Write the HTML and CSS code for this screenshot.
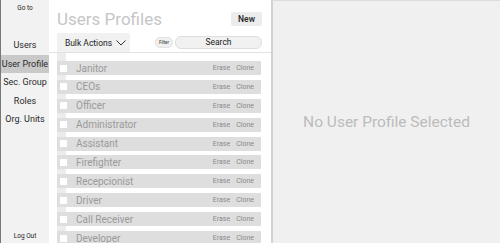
FILE: index.html
```html
<!DOCTYPE html>
<html lang="en">
<head>
    <meta charset="UTF-8">
    <title>Users Profiles</title>
    <link rel="stylesheet" href="styles.css">
</head>
<body>
    <nav class="sidebar">
        <div class="goto">Go to</div>
        <ul class="menu">
            <li>Users</li>
            <li class="active">User Profile</li>
            <li>Sec. Group</li>
            <li>Roles</li>
            <li>Org. Units</li>
        </ul>
        <div class="logout">Log Out</div>
    </nav>

    <section class="profiles">
        <div class="header">
            <h1>Users Profiles</h1>
            <button class="btn-new">New</button>
        </div>

        <div class="toolbar">
            <button class="bulk">Bulk Actions
                <svg width="10" height="6" viewBox="0 0 10 6"><path d="M0.5 0.5 L5 5 L9.5 0.5" fill="none" stroke="#333" stroke-width="1"/></svg>
            </button>
            <span class="filter">Filter</span>
            <div class="search">Search</div>
        </div>

        <ul class="list">
            <li class="row"><span class="check"></span><span class="name">Janitor</span><span class="acts">Erase</span><span class="acts">Clone</span></li>
            <li class="row"><span class="check"></span><span class="name">CEOs</span><span class="acts">Erase</span><span class="acts">Clone</span></li>
            <li class="row"><span class="check"></span><span class="name">Officer</span><span class="acts">Erase</span><span class="acts">Clone</span></li>
            <li class="row"><span class="check"></span><span class="name">Administrator</span><span class="acts">Erase</span><span class="acts">Clone</span></li>
            <li class="row"><span class="check"></span><span class="name">Assistant</span><span class="acts">Erase</span><span class="acts">Clone</span></li>
            <li class="row"><span class="check"></span><span class="name">Firefighter</span><span class="acts">Erase</span><span class="acts">Clone</span></li>
            <li class="row"><span class="check"></span><span class="name">Recepcionist</span><span class="acts">Erase</span><span class="acts">Clone</span></li>
            <li class="row"><span class="check"></span><span class="name">Driver</span><span class="acts">Erase</span><span class="acts">Clone</span></li>
            <li class="row"><span class="check"></span><span class="name">Call Receiver</span><span class="acts">Erase</span><span class="acts">Clone</span></li>
            <li class="row"><span class="check"></span><span class="name">Developer</span><span class="acts">Erase</span><span class="acts">Clone</span></li>
        </ul>
    </section>

    <section class="detail">
        <p>No User Profile Selected</p>
    </section>
</body>
</html>
```

FILE: styles.css
```css
body {
    font-family: Roboto, "Liberation Sans", sans-serif;
    margin: 0;
    height: 243px;
    display: flex;
    overflow: hidden;
    background-color: #fff;
}

.sidebar {
    width: 48px;
    background-color: #f2f2f2;
    border-left: 1px solid #777;
    display: flex;
    flex-direction: column;
    color: #222;
}

.goto {
    font-size: 6.5px;
    text-align: center;
    padding-top: 4px;
}

.menu {
    list-style: none;
    margin: 24px 0 0;
    padding: 0;
}

.menu li {
    height: 18.5px;
    line-height: 18.5px;
    font-size: 9px;
    text-align: center;
    white-space: nowrap;
    color: #2a2a2a;
}

.menu li.active {
    background-color: #c9c9c9;
}

.logout {
    margin-top: auto;
    font-size: 6.5px;
    text-align: center;
    padding-bottom: 3px;
}

.profiles {
    width: 222px;
    display: flex;
    flex-direction: column;
}

.header {
    display: flex;
    align-items: center;
    justify-content: space-between;
    padding: 9px 9px 0 8px;
}

h1 {
    margin: 0;
    font-size: 17px;
    font-weight: 400;
    color: #c6c6c6;
    line-height: 20px;
}

.btn-new {
    font-family: inherit;
    font-size: 8.5px;
    font-weight: 500;
    color: #222;
    background-color: #ececec;
    border: none;
    border-radius: 2px;
    padding: 0;
    width: 31px;
    height: 14px;
}

.toolbar {
    display: flex;
    align-items: center;
    margin-top: 4px;
    padding-left: 8px;
    padding-right: 9px;
    border-bottom: 1px solid #e2e2e2;
}

.bulk {
    font-family: inherit;
    font-size: 8.5px;
    color: #222;
    background-color: #f1f1f1;
    border: none;
    border-radius: 2px 2px 0 0;
    width: 73px;
    height: 19px;
    padding: 0 0 0 4px;
    display: flex;
    align-items: center;
    justify-content: center;
    gap: 4px;
}

.filter {
    margin-left: auto;
    font-size: 4.5px;
    color: #333;
    background-color: #f0f0f0;
    border: 1px solid #e2e2e2;
    border-radius: 5px;
    padding: 0 3px;
    height: 9px;
    line-height: 9px;
}

.search {
    margin-left: 2px;
    width: 85px;
    height: 11px;
    line-height: 11px;
    text-align: center;
    font-size: 8.5px;
    color: #222;
    background-color: #f1f1f1;
    border: 1px solid #dedede;
    border-radius: 6px;
}

.list {
    list-style: none;
    margin: 0 10px 0 8px;
    padding: 8px 0 0;
    display: flex;
    flex-direction: column;
    gap: 4.9px;
    background: linear-gradient(90deg, #ececec 9px, transparent 9px);
}

.row {
    height: 14px;
    flex-shrink: 0;
    display: flex;
    align-items: center;
    background-color: #dedede;
}

.check {
    width: 7px;
    height: 7px;
    background-color: #fff;
    margin-left: 3px;
}

.name {
    margin-left: 9px;
    font-size: 10px;
    color: #9a9a9a;
    flex: 1;
}

.acts {
    font-size: 7px;
    color: #8a8a8a;
    margin-right: 6px;
}

.acts:last-child {
    margin-right: 7px;
}

.detail {
    flex: 1;
    background-color: #f0f0f0;
    border-left: 2px solid #d2d2d2;
    border-top: 1px solid #dcdcdc;
    display: flex;
    align-items: center;
    justify-content: center;
}

.detail p {
    margin: 0;
    font-size: 15.5px;
    color: #bcbcbc;
}
```
